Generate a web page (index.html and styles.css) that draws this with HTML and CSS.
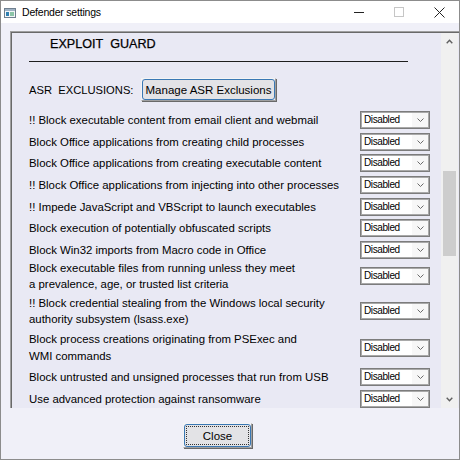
FILE: index.html
```html
<!DOCTYPE html>
<html>
<head>
<meta charset="utf-8">
<link rel="stylesheet" href="styles.css">
</head>
<body>
<div class="window">
  <div class="titlebar">
    <svg class="app-icon" width="12" height="10" viewBox="0 0 12 10">
      <rect x="0.5" y="0.5" width="11" height="9" fill="#f4f6f8" stroke="#6f7f8f"/>
      <rect x="1" y="1" width="10" height="2" fill="#9fb2c4"/>
      <rect x="2" y="4" width="3" height="4" fill="#2f7fb0"/>
      <rect x="6" y="4" width="4" height="4" fill="#8cc5a8"/>
    </svg>
    <span class="title">Defender settings</span>
    <div class="controls">
      <div class="ctl">
        <svg width="10" height="10" viewBox="0 0 10 10"><line x1="0" y1="5.5" x2="10" y2="5.5" stroke="#222" stroke-width="1"/></svg>
      </div>
      <div class="ctl">
        <svg width="10" height="10" viewBox="0 0 10 10"><rect x="0.5" y="0.5" width="9" height="9" fill="none" stroke="#c6c6c6" stroke-width="1"/></svg>
      </div>
      <div class="ctl">
        <svg width="11" height="11" viewBox="0 0 11 11"><path d="M0.5 0.5 L10.5 10.5 M10.5 0.5 L0.5 10.5" stroke="#222" stroke-width="1" fill="none"/></svg>
      </div>
    </div>
  </div>
  <div class="client">
    <div class="panel">
      <div class="panel-content">
        <div class="header">EXPLOIT&nbsp; GUARD</div>
        <div class="rule"></div>
        <div class="asr">
          <span class="asr-label">ASR&nbsp; EXCLUSIONS:</span>
          <div class="btn btn-asr"><span class="btn-face">Manage ASR Exclusions</span></div>
        </div>
        <div class="rows">
          <div class="row"><span class="label">!! Block executable content from email client and webmail</span><div class="select"><span class="select-text">Disabled</span><span class="select-arrow"><svg width="7" height="4" viewBox="0 0 7 4"><polyline points="0.5,0.5 3.5,3.5 6.5,0.5" fill="none" stroke="#6a6a6a" stroke-width="1"/></svg></span></div></div>
          <div class="row"><span class="label">Block Office applications from creating child processes</span><div class="select"><span class="select-text">Disabled</span><span class="select-arrow"><svg width="7" height="4" viewBox="0 0 7 4"><polyline points="0.5,0.5 3.5,3.5 6.5,0.5" fill="none" stroke="#6a6a6a" stroke-width="1"/></svg></span></div></div>
          <div class="row"><span class="label">Block Office applications from creating executable content</span><div class="select"><span class="select-text">Disabled</span><span class="select-arrow"><svg width="7" height="4" viewBox="0 0 7 4"><polyline points="0.5,0.5 3.5,3.5 6.5,0.5" fill="none" stroke="#6a6a6a" stroke-width="1"/></svg></span></div></div>
          <div class="row"><span class="label">!! Block Office applications from injecting into other processes</span><div class="select"><span class="select-text">Disabled</span><span class="select-arrow"><svg width="7" height="4" viewBox="0 0 7 4"><polyline points="0.5,0.5 3.5,3.5 6.5,0.5" fill="none" stroke="#6a6a6a" stroke-width="1"/></svg></span></div></div>
          <div class="row"><span class="label">!! Impede JavaScript and VBScript to launch executables</span><div class="select"><span class="select-text">Disabled</span><span class="select-arrow"><svg width="7" height="4" viewBox="0 0 7 4"><polyline points="0.5,0.5 3.5,3.5 6.5,0.5" fill="none" stroke="#6a6a6a" stroke-width="1"/></svg></span></div></div>
          <div class="row"><span class="label">Block execution of potentially obfuscated scripts</span><div class="select"><span class="select-text">Disabled</span><span class="select-arrow"><svg width="7" height="4" viewBox="0 0 7 4"><polyline points="0.5,0.5 3.5,3.5 6.5,0.5" fill="none" stroke="#6a6a6a" stroke-width="1"/></svg></span></div></div>
          <div class="row"><span class="label">Block Win32 imports from Macro code in Office</span><div class="select"><span class="select-text">Disabled</span><span class="select-arrow"><svg width="7" height="4" viewBox="0 0 7 4"><polyline points="0.5,0.5 3.5,3.5 6.5,0.5" fill="none" stroke="#6a6a6a" stroke-width="1"/></svg></span></div></div>
          <div class="row row-double row-a"><span class="label">Block executable files from running unless they meet<br>a prevalence, age, or trusted list criteria</span><div class="select"><span class="select-text">Disabled</span><span class="select-arrow"><svg width="7" height="4" viewBox="0 0 7 4"><polyline points="0.5,0.5 3.5,3.5 6.5,0.5" fill="none" stroke="#6a6a6a" stroke-width="1"/></svg></span></div></div>
          <div class="row row-double row-b"><span class="label">!! Block credential stealing from the Windows local security<br>authority subsystem (lsass.exe)</span><div class="select"><span class="select-text">Disabled</span><span class="select-arrow"><svg width="7" height="4" viewBox="0 0 7 4"><polyline points="0.5,0.5 3.5,3.5 6.5,0.5" fill="none" stroke="#6a6a6a" stroke-width="1"/></svg></span></div></div>
          <div class="row row-double"><span class="label">Block process creations originating from PSExec and<br>WMI commands</span><div class="select"><span class="select-text">Disabled</span><span class="select-arrow"><svg width="7" height="4" viewBox="0 0 7 4"><polyline points="0.5,0.5 3.5,3.5 6.5,0.5" fill="none" stroke="#6a6a6a" stroke-width="1"/></svg></span></div></div>
          <div class="row"><span class="label">Block untrusted and unsigned processes that run from USB</span><div class="select"><span class="select-text">Disabled</span><span class="select-arrow"><svg width="7" height="4" viewBox="0 0 7 4"><polyline points="0.5,0.5 3.5,3.5 6.5,0.5" fill="none" stroke="#6a6a6a" stroke-width="1"/></svg></span></div></div>
          <div class="row"><span class="label">Use advanced protection against ransomware</span><div class="select"><span class="select-text">Disabled</span><span class="select-arrow"><svg width="7" height="4" viewBox="0 0 7 4"><polyline points="0.5,0.5 3.5,3.5 6.5,0.5" fill="none" stroke="#6a6a6a" stroke-width="1"/></svg></span></div></div>
        </div>
      </div>
      <div class="scrollbar">
        <div class="sb-btn"><svg width="7" height="5" viewBox="0 0 7 5"><polyline points="0.7,4.2 3.5,1.2 6.3,4.2" fill="none" stroke="#606060" stroke-width="1.4"/></svg></div>
        <div class="sb-track"><div class="sb-thumb"></div></div>
        <div class="sb-btn"><svg width="7" height="5" viewBox="0 0 7 5"><polyline points="0.7,0.8 3.5,3.8 6.3,0.8" fill="none" stroke="#606060" stroke-width="1.4"/></svg></div>
      </div>
    </div>
    <div class="footer">
      <div class="btn btn-close"><span class="btn-face"><span class="focus">Close</span></span></div>
    </div>
  </div>
</div>
</body>
</html>
```

FILE: styles.css
```css
html, body {
  margin: 0;
  padding: 0;
  background: #f0f0f8;
}

body {
  font-family: "Liberation Sans", Arial, sans-serif;
  color: #000;
}

.window {
  width: 460px;
  height: 460px;
  box-sizing: border-box;
  border: 1px solid #8c8c8c;
  overflow: hidden;
  background: #f0f0f8;
  display: flex;
  flex-direction: column;
}

.titlebar {
  height: 22px;
  flex: none;
  background: #ffffff;
  display: flex;
  align-items: center;
}

.app-icon {
  margin-left: 3px;
  margin-top: 1px;
  flex: none;
}

.title {
  margin-left: 6px;
  font-size: 10.5px;
  letter-spacing: -0.2px;
  line-height: 22px;
  color: #000;
}

.controls {
  margin-left: auto;
  display: flex;
  height: 22px;
}

.ctl {
  width: 40px;
  height: 22px;
  display: flex;
  align-items: center;
  justify-content: center;
}

.client {
  flex: 1;
  display: flex;
  flex-direction: column;
}

.panel {
  flex: none;
  margin-left: 9px;
  margin-top: 8px;
  width: 470px;
  height: 377px;
  box-sizing: border-box;
  border-top: 1px solid #a0a0a0;
  border-left: 1px solid #a0a0a0;
  box-shadow: inset 1px 1px 0 #696969;
  padding: 1px 0 0 1px;
  background: #e9e9f4;
  display: flex;
}

.panel-content {
  flex: none;
  width: 429px;
  overflow: hidden;
}

.header {
  margin-top: 3px;
  padding-left: 38px;
  font-size: 12.6px;
  line-height: 16px;
  height: 16px;
  -webkit-text-stroke: 0.25px #000;
  white-space: nowrap;
}

.rule {
  margin: 9px 0 0 17px;
  width: 379px;
  height: 1px;
  background: #1e1e1e;
}

.asr {
  margin-top: 16px;
  padding-left: 17px;
  height: 23px;
  display: flex;
  align-items: center;
}

.asr-label {
  flex: 0 0 112px;
  font-size: 11.2px;
  white-space: nowrap;
}

.btn {
  box-sizing: border-box;
  display: flex;
  border-top: 1px solid #f4f4f4;
  border-left: 1px solid #f4f4f4;
  border-right: 1px solid #a0a0a0;
  border-bottom: 1px solid #a0a0a0;
  box-shadow: 1px 1px 0 #696969;
}

.btn-face {
  flex: 1;
  display: flex;
  align-items: center;
  justify-content: center;
  border: 1px solid #3a78b4;
  border-radius: 3px;
  background: #e3e3e6;
  font-size: 11.5px;
  white-space: nowrap;
}

.btn-asr {
  width: 135px;
  height: 23px;
}

.rows {
  margin-top: 10px;
  padding-left: 17px;
  padding-right: 11px;
  display: flex;
  flex-direction: column;
  gap: 3.67px;
}

.row {
  display: flex;
  align-items: center;
  min-height: 18px;
}

.row-double .label {
  line-height: 16.5px;
}

.row-a {
  margin-top: -2.67px;
}

.row-b {
  margin-top: -2px;
}

.label {
  font-size: 11.4px;
  line-height: 16px;
  white-space: nowrap;
}

.select {
  margin-left: auto;
  flex: none;
  width: 70px;
  height: 18px;
  box-sizing: border-box;
  border: 1px solid #7c7c7c;
  box-shadow: inset 0 0 0 1px #a9a9a9;
  padding: 1px;
  display: flex;
  background: #ffffff;
}

.select-text {
  flex: 1;
  background: #ffffff;
  font-size: 10px;
  letter-spacing: -0.4px;
  line-height: 14px;
  padding-left: 2px;
}

.select-arrow {
  width: 16px;
  background: #f7f7f7;
  display: flex;
  align-items: center;
  justify-content: center;
}

.scrollbar {
  flex: none;
  width: 17px;
  background: #f0f0f0;
  display: flex;
  flex-direction: column;
}

.sb-btn {
  height: 17px;
  flex: none;
  display: flex;
  align-items: center;
  justify-content: center;
}

.sb-track {
  flex: 1;
}

.sb-thumb {
  margin: 121px 2px 0 2px;
  height: 85px;
  background: #cdcdcd;
}

.footer {
  padding-top: 15px;
  padding-left: 182px;
  display: flex;
}

.btn-close {
  width: 69px;
  height: 25px;
}

.btn-close .btn-face {
  padding: 1px;
}

.focus {
  flex: 1;
  align-self: stretch;
  display: flex;
  align-items: center;
  justify-content: center;
  border: 1px dotted #333;
  font-size: 11.5px;
}
```
